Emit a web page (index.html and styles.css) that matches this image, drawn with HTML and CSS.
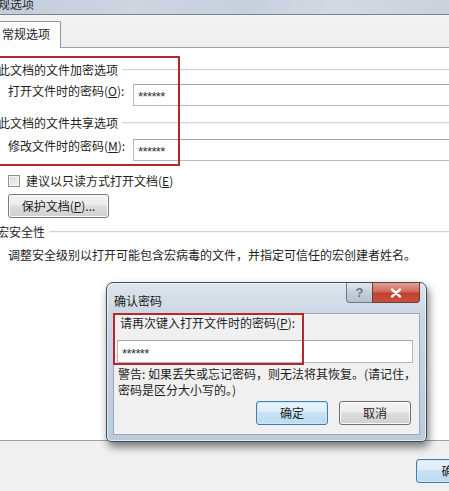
FILE: index.html
```html
<!DOCTYPE html>
<html lang="zh-CN">
<head>
<meta charset="utf-8">
<title>常规选项</title>
<link rel="stylesheet" href="styles.css">
</head>
<body>
<div class="window">
  <div class="titlebar"><span class="title">常规选项</span></div>
  <div class="tabstrip"><div class="tab">常规选项</div></div>
  <div class="panel">
    <div class="legend"><span class="legend-text">此文档的文件加密选项</span><span class="legend-line"></span></div>
    <div class="field"><span class="label">打开文件时的密码(<u>O</u>):</span><div class="input">******</div></div>
    <div class="legend l2"><span class="legend-text">此文档的文件共享选项</span><span class="legend-line"></span></div>
    <div class="field f2"><span class="label">修改文件时的密码(<u>M</u>):</span><div class="input">******</div></div>
    <div class="check"><span class="box"></span><span>建议以只读方式打开文档(<u>E</u>)</span></div>
    <div class="btn protect">保护文档(<u>P</u>)...</div>
    <div class="legend l3"><span class="legend-text">宏安全性</span><span class="legend-line"></span></div>
    <p class="desc">调整安全级别以打开可能包含宏病毒的文件，并指定可信任的宏创建者姓名。</p>

    <div class="mark mark-main"></div>

    <div class="dialog">
      <div class="dlg-title">
        <span class="dlg-caption">确认密码</span>
        <div class="caption-btns">
          <div class="cbtn help">?</div>
          <div class="cbtn close"><svg width="12" height="10" viewBox="0 0 12 10"><path d="M2 1.5 L10 8.5 M10 1.5 L2 8.5" stroke="#fff" stroke-width="2.4" stroke-linecap="round"/></svg></div>
        </div>
      </div>
      <div class="dlg-client">
        <div class="mark mark-dlg"></div>
        <div class="dlg-label">请再次键入打开文件时的密码(<u>P</u>):</div>
        <div class="input dlg-input">******</div>
        <p class="warn"><span class="wline">警告: 如果丢失或忘记密码，则无法将其恢复。(请记住，</span><span class="wline">密码是区分大小写的。)</span></p>
        <div class="dlg-buttons">
          <div class="btn dbtn default">确定</div>
          <div class="btn dbtn">取消</div>
        </div>
      </div>
    </div>
  </div>
  <div class="footer"><div class="btn dbtn default okbtn">确定</div></div>
</div>
</body>
</html>
```

FILE: styles.css
```css
html, body {
  margin: 0;
  padding: 0;
  width: 449px;
  height: 491px;
  overflow: hidden;
  background: #ffffff;
}

.window {
  width: 449px;
  height: 491px;
  display: flex;
  flex-direction: column;
  font-family: "Noto Sans CJK SC", "Liberation Sans", sans-serif;
  font-size: 12px;
  line-height: 16px;
  color: #1e1e1e;
  overflow: hidden;
}

u { text-decoration: underline; text-underline-offset: 1px; }

/* title bar */
.titlebar {
  height: 14px;
  flex: none;
  background: linear-gradient(90deg, #c3cdd9 0%, #ccd5e0 30%, #c6d0dc 55%, #d2dae4 75%, #c8d1dc 100%);
  border-bottom: 1px solid #7d848c;
  overflow: hidden;
  position: relative;
}
.title {
  display: block;
  margin-left: -14px;
  margin-top: -4px;
  line-height: 16px;
  color: #2a2a2a;
}

/* tab strip */
.tabstrip {
  height: 27px;
  flex: none;
  padding-top: 5px;
  background: linear-gradient(#f3f3f3, #eeeeee);
  display: flex;
  align-items: flex-end;
}
.tab {
  height: 27px;
  box-sizing: border-box;
  margin-left: -2px;
  margin-bottom: -1px;
  padding: 4px 10px 0 3px;
  background: #fdfdfd;
  border: 1px solid #8f939a;
  border-bottom: none;
  border-radius: 2px 2px 0 0;
  position: relative;
  z-index: 2;
}

/* main panel */
.panel {
  flex: 1;
  position: relative;
  background: #ffffff;
  border-top: 1px solid #a3a3a3;
  padding-top: 14px;
}

.legend {
  display: flex;
  align-items: center;
  height: 16px;
  margin-left: -2px;
}
.legend-text { white-space: nowrap; }
.legend-line {
  flex: 1;
  height: 0;
  margin-left: 4px;
  border-top: 1px solid #d3d3d3;
  border-bottom: 1px solid #f4f4f4;
}
.l2 { margin-top: 9px; }
.l3 { margin-top: 6px; margin-left: -3px; }

.field {
  display: flex;
  align-items: flex-start;
  margin-top: 6px;
  padding-left: 8px;
}
.f2 { margin-top: 8px; }
.field .label {
  width: 125px;
  flex: none;
  white-space: nowrap;
  margin-top: -1px;
}
.input {
  height: 22px;
  box-sizing: border-box;
  width: 340px;
  flex: none;
  background: #fff;
  border: 1px solid #b5b8bd;
  border-top-color: #a4a7ad;
  padding-left: 4px;
  font-family: "Liberation Sans", sans-serif;
  font-size: 13px;
  line-height: 24px;
  color: #333;
  letter-spacing: -0.6px;
}

.check {
  display: flex;
  align-items: center;
  margin-top: 12px;
  padding-left: 8px;
  height: 16px;
}
.box {
  width: 10px;
  height: 10px;
  border: 1px solid #8e8f8f;
  background: linear-gradient(135deg, #d9d9d9, #f4f4f4);
  box-shadow: inset 0 0 0 1px #f6f6f6;
  margin-right: 6px;
}

.btn {
  box-sizing: border-box;
  border: 1px solid #7a7a7a;
  border-radius: 3px;
  background: linear-gradient(#f4f4f4 0%, #ebebeb 45%, #dddddd 50%, #d0d0d0 100%);
  box-shadow: inset 0 0 0 1px #fbfbfb;
  text-align: center;
  white-space: nowrap;
}
.protect {
  width: 101px;
  height: 24px;
  line-height: 22px;
  margin-top: 5px;
  margin-left: 8px;
}

.desc {
  margin: 7px 0 0 8px;
  white-space: nowrap;
}

/* red annotation boxes */
.mark {
  position: absolute;
  border: 2px solid #b3282d;
  box-sizing: border-box;
  pointer-events: none;
  z-index: 5;
}
.mark-main {
  left: -4px;
  top: 8px;
  width: 184px;
  height: 110px;
}

/* dialog */
.dialog {
  position: absolute;
  left: 106px;
  top: 234px;
  width: 321px;
  height: 160px;
  box-sizing: border-box;
  border: 1px solid #3e4a56;
  border-radius: 7px 7px 5px 5px;
  background: linear-gradient(#dde4ec 0%, #ccd7e3 20%, #c2d0e0 60%, #bccbdc 100%);
  box-shadow: 2px 5px 9px rgba(0, 0, 0, 0.5), inset 0 0 0 1px rgba(255, 255, 255, 0.6);
  padding: 0 6px 6px 6px;
  display: flex;
  flex-direction: column;
  z-index: 4;
}
.dlg-title {
  height: 30px;
  flex: none;
  display: flex;
  justify-content: space-between;
  align-items: flex-start;
}
.dlg-caption {
  margin-top: 10px;
  margin-left: 1px;
  color: #1a1a1a;
}
.caption-btns {
  display: flex;
}
.cbtn {
  height: 20px;
  box-sizing: border-box;
  border: 1px solid #6b7785;
  border-top: none;
  display: flex;
  align-items: center;
  justify-content: center;
}
.help {
  width: 26px;
  border-radius: 0 0 0 4px;
  border-right: none;
  background: linear-gradient(#e2e8ee, #c3ced9 50%, #b4c2d0);
  font-family: "Liberation Sans", sans-serif;
  font-weight: bold;
  font-size: 13px;
  color: #6a7788;
}
.close {
  width: 48px;
  border-radius: 0 0 4px 0;
  border-color: #6b3a3a;
  background: linear-gradient(#e4a090 0%, #d46a5a 45%, #c2402f 55%, #c9513e 100%);
}

.dlg-client {
  flex: 1;
  position: relative;
  background: #f0f0f0;
  border: 1px solid #9aa8b8;
  padding: 1px 0 0 0;
  display: flex;
  flex-direction: column;
}
.mark-dlg {
  left: -1px;
  top: -1px;
  width: 191px;
  height: 52px;
}
.dlg-label {
  padding-left: 6px;
}
.dlg-input {
  width: 296px;
  height: 23px;
  margin: 9px 0 0 3px;
  line-height: 25px;
}
.warn {
  margin: 3px 0 0 4px;
  white-space: nowrap;
  display: flex;
  flex-direction: column;
}
.wline {
  display: block;
  height: 16px;
  line-height: 16px;
}
.dlg-buttons {
  display: flex;
  justify-content: flex-end;
  gap: 11px;
  margin-top: 3px;
  padding-right: 8px;
}
.dbtn {
  width: 72px;
  height: 24px;
  line-height: 22px;
  border-color: #707070;
}
.default {
  border-color: #3c7fb1;
  box-shadow: inset 0 0 0 1px #cfe6f6;
  background: linear-gradient(#eaf4fb 0%, #dbecf8 45%, #c5e1f4 50%, #bcdcf2 100%);
}

/* footer */
.footer {
  height: 32px;
  flex: none;
  border-top: 1px solid #a0a0a0;
  background: #f0f0f0;
  display: flex;
  justify-content: flex-end;
  align-items: flex-start;
  padding-top: 18px;
}
.okbtn {
  width: 75px;
  flex: none;
  margin-right: -42px;
}
```
